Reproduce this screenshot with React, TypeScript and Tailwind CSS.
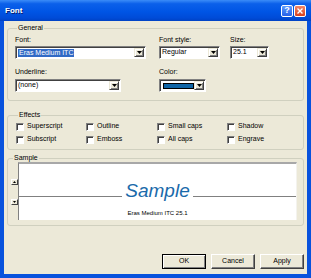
import React from "react";

function DropBtn() {
  return (
    <div className="flex h-full w-[10px] shrink-0 items-center justify-center border border-t-[#ECE9D8] border-l-[#ECE9D8] border-r-[#404040] border-b-[#404040] bg-[#ECE9D8] shadow-[inset_1px_1px_#fff,inset_-1px_-1px_#808080]">
      <svg width="5" height="3" viewBox="0 0 5 3">
        <path d="M0 0h5L2.5 3z" fill="#000" />
      </svg>
    </div>
  );
}

function Combo({ className, children }: { className: string; children?: React.ReactNode }) {
  return (
    <div
      className={`flex h-[13px] items-stretch border border-t-[#808080] border-l-[#808080] border-r-white border-b-white bg-white p-px shadow-[inset_1px_1px_#404040] ${className}`}
    >
      <div className="flex flex-1 items-center overflow-hidden pl-px">{children}</div>
      <DropBtn />
    </div>
  );
}

function Label({ children }: { children: React.ReactNode }) {
  return <div className="h-[9px] leading-[9px]">{children}</div>;
}

function Check({ label }: { label: string }) {
  return (
    <div className="flex h-[13px] items-center gap-[3px]">
      <span className="h-[8px] w-[8px] border border-t-[#808080] border-l-[#808080] border-r-white border-b-white bg-white shadow-[inset_1px_1px_#404040]" />
      <span>{label}</span>
    </div>
  );
}

function Btn({ label, def }: { label: string; def?: boolean }) {
  return (
    <button
      className={
        def
          ? "flex h-[15px] w-[44px] items-center justify-center border border-black bg-[#ECE9D8] shadow-[inset_1px_1px_#fff,inset_-1px_-1px_#808080]"
          : "flex h-[15px] w-[44px] items-center justify-center border border-t-white border-l-white border-r-[#404040] border-b-[#404040] bg-[#ECE9D8] shadow-[inset_-1px_-1px_#808080]"
      }
    >
      {label}
    </button>
  );
}

function Arrow({ up }: { up?: boolean }) {
  return (
    <div className="flex h-[6px] w-[7px] items-center justify-center border border-t-white border-l-white border-r-[#404040] border-b-[#404040] bg-[#ECE9D8]">
      <svg width="3" height="2" viewBox="0 0 3 2">
        <path d={up ? "M0 2h3L1.5 0z" : "M0 0h3L1.5 2z"} fill="#000" />
      </svg>
    </div>
  );
}

export default function App() {
  return (
    <div className="flex h-[278px] w-[311px] flex-col bg-[#0852DD] font-['Liberation_Sans',Arial,sans-serif] text-[7px] text-black">
      {/* title bar */}
      <div className="flex h-[21px] shrink-0 items-center bg-[linear-gradient(180deg,#3B8CF8_0%,#0B60EA_18%,#0055E5_55%,#004BD8_85%,#0042C4_100%)] pl-[5px] pr-[5px]">
        <span className="text-[8px] font-bold text-white [text-shadow:1px_1px_#0A1E6E]">Font</span>
        <div className="ml-auto flex items-center gap-px">
          <div className="flex h-[12px] w-[12px] items-center justify-center rounded-[2px] border border-white bg-[linear-gradient(180deg,#5C9BFF,#2660E8)] text-[9px] font-bold leading-none text-white">
            ?
          </div>
          <div className="flex h-[12px] w-[12px] items-center justify-center rounded-[2px] border border-white bg-[linear-gradient(180deg,#F0886A,#D8401E)]">
            <svg width="6" height="6" viewBox="0 0 6 6">
              <path d="M0.5 0.5L5.5 5.5M5.5 0.5L0.5 5.5" stroke="#fff" strokeWidth="1.4" />
            </svg>
          </div>
        </div>
      </div>

      {/* body */}
      <div className="flex flex-1 flex-col px-[4px] pb-[4px]">
        <div className="flex flex-1 flex-col bg-[#ECE9D8] px-[3px]">
          {/* General */}
          <fieldset className="mt-[3px] h-[77px] rounded-[3px] border border-[#D0D0BF] px-[7px]">
            <legend className="ml-[2px] px-[1px] leading-[8px]">General</legend>
            <div className="flex pt-[3px]">
              <div className="flex w-[131px] flex-col gap-[2px]">
                <Label>Font:</Label>
                <Combo className="w-[131px]">
                  <span className="bg-[#316AC5] px-px leading-[8px] text-white">Eras Medium ITC</span>
                </Combo>
              </div>
              <div className="ml-[13px] flex w-[61px] flex-col gap-[2px]">
                <Label>Font style:</Label>
                <Combo className="w-[61px]">
                  <span>Regular</span>
                </Combo>
              </div>
              <div className="ml-[10px] flex w-[39px] flex-col gap-[2px]">
                <Label>Size:</Label>
                <Combo className="w-[39px]">
                  <span>25.1</span>
                </Combo>
              </div>
            </div>
            <div className="mt-[8px] flex">
              <div className="flex w-[131px] flex-col gap-[3px]">
                <Label>Underline:</Label>
                <Combo className="w-[106px]">
                  <span>(none)</span>
                </Combo>
              </div>
              <div className="ml-[13px] flex w-[61px] flex-col gap-[3px]">
                <Label>Color:</Label>
                <Combo className="w-[47px]">
                  <span className="ml-px h-[6px] w-[32px] border border-black bg-[#0F65A6]" />
                </Combo>
              </div>
            </div>
          </fieldset>

          {/* Effects */}
          <fieldset className="mt-[10px] h-[39px] rounded-[3px] border border-[#D0D0BF] pl-[8px]">
            <legend className="ml-[2px] px-[1px] leading-[8px]">Effects</legend>
            <div className="grid grid-cols-[70px_71px_70px_70px] pt-px">
              <Check label="Superscript" />
              <Check label="Outline" />
              <Check label="Small caps" />
              <Check label="Shadow" />
              <Check label="Subscript" />
              <Check label="Emboss" />
              <Check label="All caps" />
              <Check label="Engrave" />
            </div>
          </fieldset>

          {/* Sample */}
          <fieldset className="mt-[4px] h-[72px] rounded-[3px] border border-[#D0D0BF] pl-[3px] pr-[6px]">
            <legend className="ml-[2px] px-[1px] leading-[8px]">Sample</legend>
            <div className="flex h-[58px]">
              <div className="flex w-[7px] flex-col pt-[17px]">
                <Arrow up />
                <div className="h-[14px]" />
                <Arrow />
              </div>
              <div className="flex flex-1 flex-col border-t-2 border-l border-t-[#A8A8A8] border-l-[#808080] border-r border-r-[#F4F3EE] bg-white">
                <div className="mt-[17px] flex items-baseline">
                  <div className="h-px flex-1 bg-[#808080]" />
                  <span className="px-[3px] text-[19px] italic leading-none text-[#1A6AAA]">Sample</span>
                  <div className="h-px flex-1 bg-[#808080]" />
                </div>
                <div className="mt-[9px] text-center text-[6px] leading-[8px]">Eras Medium ITC 25.1</div>
              </div>
            </div>
          </fieldset>

          {/* buttons */}
          <div className="mt-auto mb-[5px] flex justify-end gap-[5px]">
            <Btn label="OK" def />
            <Btn label="Cancel" />
            <Btn label="Apply" />
          </div>
        </div>
      </div>
    </div>
  );
}
